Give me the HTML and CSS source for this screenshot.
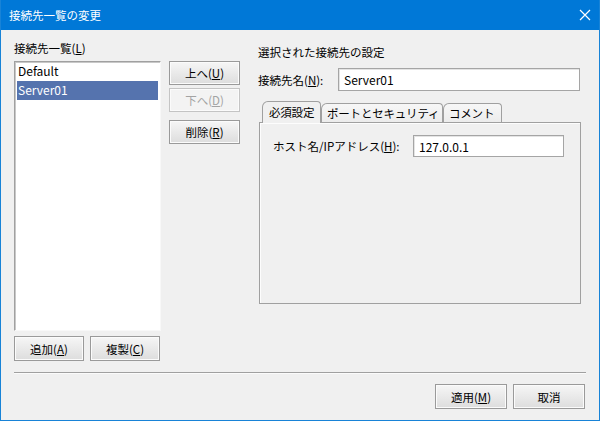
FILE: index.html
```html
<!DOCTYPE html>
<html lang="ja">
<head>
  <meta charset="UTF-8" />
  <title>接続先一覧の変更</title>
  <link rel="stylesheet" href="styles.css">
</head>
<body>
  <div class="window">
    <div class="titlebar">
      <span class="title">接続先一覧の変更</span>
      <svg class="close" width="12" height="12" viewBox="0 0 12 12">
        <path d="M1 1 L11 11 M11 1 L1 11" stroke="#fff" stroke-width="1.2" fill="none" />
      </svg>
    </div>

    <div class="content">
      <div class="main">
        <!-- connection list -->
        <div class="list-col">
          <div class="label">接続先一覧(<u>L</u>)</div>
          <div class="listbox">
            <div class="item">Default</div>
            <div class="item selected">Server01</div>
          </div>
          <div class="list-buttons">
            <button class="btn small">追加(<u>A</u>)</button>
            <button class="btn small">複製(<u>C</u>)</button>
          </div>
        </div>

        <!-- move / delete -->
        <div class="move-col">
          <button class="btn move">上へ(<u>U</u>)</button>
          <button class="btn move" disabled>下へ(<u>D</u>)</button>
          <button class="btn move gap">削除(<u>R</u>)</button>
        </div>

        <!-- details -->
        <div class="detail-col">
          <div class="section-title">選択された接続先の設定</div>
          <div class="field-row">
            <span class="field-label name-label">接続先名(<u>N</u>):</span>
            <div class="textbox name-box">Server01</div>
          </div>

          <div class="tabs">
            <div class="tab active">必須設定</div>
            <div class="tab">ポートとセキュリティ</div>
            <div class="tab">コメント</div>
          </div>
          <div class="tab-panel">
            <div class="field-row">
              <span class="field-label host-label">ホスト名/IPアドレス(<u>H</u>):</span>
              <div class="textbox host-box">127.0.0.1</div>
            </div>
          </div>
        </div>
      </div>

      <div class="separator"></div>

      <div class="footer">
        <button class="btn wide">適用(<u>M</u>)</button>
        <button class="btn wide">取消</button>
      </div>
    </div>
  </div>
</body>
</html>
```

FILE: styles.css
```css
body {
  margin: 0;
  font-family: "Noto Sans CJK JP", "Noto Sans", sans-serif;
  font-size: 11.5px;
  color: #000;
}

.window {
  width: 600px;
  height: 421px;
  box-sizing: border-box;
  border: 1px solid #1883d7;
  border-top: none;
  background: #f0f0f0;
  overflow: hidden;
}

.titlebar {
  height: 30px;
  margin: 0 -1px;
  background: #0078d7;
  color: #fff;
  display: flex;
  align-items: center;
  justify-content: space-between;
  padding: 0 8px 0 9px;
}
.title { line-height: 16px; }
.close { margin-right: 1px; }

.content { padding: 10px 13px 0 13px; }

.main { display: flex; align-items: flex-start; }

.label, .section-title, .field-label { line-height: 16px; white-space: nowrap; }

/* list */
.list-col { width: 147px; }
.label { margin-bottom: 5px; }
.listbox {
  height: 270px;
  box-sizing: border-box;
  background: #fff;
  border: 1px solid;
  border-color: #a0a0a0 #f8f8f8 #f8f8f8 #a0a0a0;
  box-shadow: inset 1px 1px 0 #c8c8c8;
  padding: 0 2px;
}
.item {
  height: 19px;
  line-height: 18px;
  padding-left: 1px;
  font-size: 12px;
}
.item.selected { background: #5573ae; color: #fff; }

.list-buttons {
  display: flex;
  gap: 6px;
  margin-top: 5px;
}

/* buttons */
.btn {
  font: inherit;
  color: #000;
  height: 25px;
  padding: 0;
  border: 1px solid #9a9a9a;
  border-radius: 0;
  background: linear-gradient(#f6f6f6, #dddddd);
  box-shadow: inset 0 0 0 1px #fbfbfb;
  line-height: 20px;
}
.btn:disabled {
  color: #a3a3a3;
  border-color: #c4c4c4;
  background: #f3f3f3;
}
.btn.small { width: 70px; }
.btn.wide { width: 72px; }

.move-col {
  width: 71px;
  margin-left: 8px;
  margin-top: 21px;
  display: flex;
  flex-direction: column;
}
.btn.move { width: 71px; height: 24px; margin-bottom: 3px; }
.btn.move.gap { margin-top: 5px; }

/* details */
.detail-col {
  margin-left: 18px;
  width: 323px;
  padding-top: 4px;
}
.field-row { display: flex; align-items: center; }
.detail-col > .field-row { margin-top: 8px; }
.name-label { width: 80px; }
.host-label { width: 140px; }

.textbox {
  box-sizing: border-box;
  height: 23px;
  line-height: 19px;
  padding: 1px 5px;
  font-size: 12px;
  background: #fff;
  border: 1px solid #a5a5a5;
  box-shadow: inset 1px 1px 0 #e4e4e4;
}
.name-box { width: 242px; }
.host-box { width: 151px; height: 22px; }

.tabs {
  display: flex;
  align-items: flex-end;
  margin-top: 10px;
  padding-left: 4px;
  height: 21px;
  position: relative;
  z-index: 1;
}
.tab {
  height: 19px;
  line-height: 18px;
  padding: 0 5px;
  border: 1px solid #a0a0a0;
  border-bottom: none;
  border-radius: 6px 4px 0 0;
  background: linear-gradient(#f7f7f7, #ececec);
  box-sizing: border-box;
  white-space: nowrap;
  letter-spacing: -0.2px;
}
.tab:first-child { width: 59px; padding-left: 6px; }
.tab:nth-child(2) { width: 122px; }
.tab:nth-child(3) { width: 59px; }
.tab.active {
  height: 22px;
  margin-bottom: -1px;
  background: #f0f0f0;
  line-height: 20px;
}

.tab-panel {
  height: 182px;
  box-sizing: border-box;
  margin-left: 1px;
  border: 1px solid #a0a0a0;
  box-shadow: inset 1px 1px 0 #fdfdfd;
  padding: 12px 13px;
}

.separator {
  margin-top: 11px;
  height: 1px;
  background: #a0a0a0;
  border-bottom: 1px solid #fbfbfb;
}

.footer {
  display: flex;
  justify-content: flex-end;
  gap: 6px;
  margin-top: 10px;
  padding-right: 1px;
}
```
